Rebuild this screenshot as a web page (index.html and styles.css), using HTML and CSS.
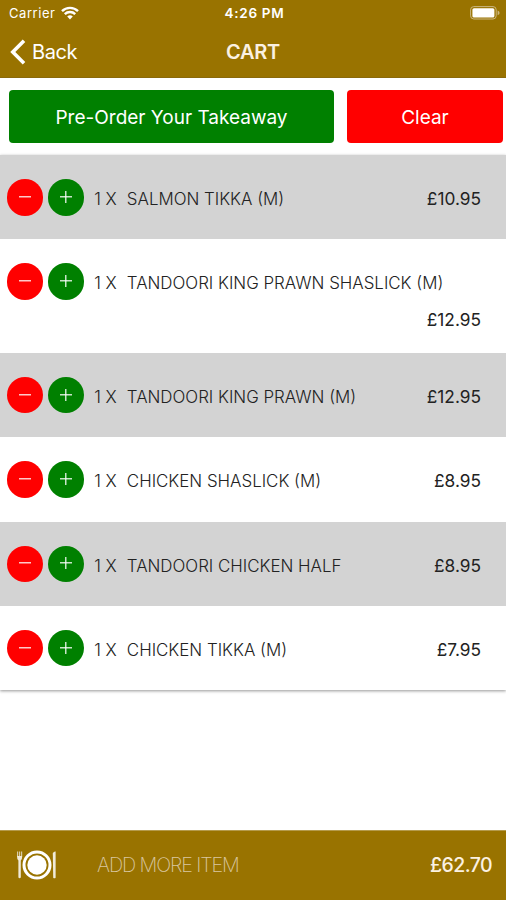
FILE: index.html
```html
<!DOCTYPE html>
<html lang="en">
<head>
    <meta charset="UTF-8">
    <meta name="viewport" content="width=device-width, initial-scale=1.0">
    <title>Cart</title>
    <link rel="stylesheet" href="styles.css">
</head>
<body>
    <header>
        <div class="status-bar">
            <div class="carrier">
                <span>Carrier</span>
                <svg class="wifi" viewBox="0 0 18 14" width="18" height="14">
                    <path d="M1 5.2a11.3 11.3 0 0 1 16 0M3.8 8.2a7.4 7.4 0 0 1 10.4 0" fill="none" stroke="#fff" stroke-width="2.4"/>
                    <path d="M9 13.4L6.2 10.5a4 4 0 0 1 5.6 0z" fill="#fff"/>
                </svg>
            </div>
            <span class="time">4:26 PM</span>
            <svg class="battery" viewBox="0 0 30 14" width="30" height="14">
                <rect x="0.6" y="0.6" width="25.6" height="12.4" rx="3.2" fill="none" stroke="#cbb780" stroke-width="1"/>
                <rect x="2.4" y="2.2" width="22" height="9.4" rx="1.6" fill="#fff"/>
                <path d="M27.6 4.6q2 .8 2 2.3t-2 2.3z" fill="#cbb780"/>
            </svg>
        </div>
        <nav>
            <a class="back" href="#">
                <svg viewBox="0 0 16 26" width="16" height="26">
                    <path d="M14 1.8L2.8 13L14 24.2" fill="none" stroke="#fff" stroke-width="3.6"/>
                </svg>
                <span>Back</span>
            </a>
            <h1>CART</h1>
        </nav>
    </header>

    <main>
        <div class="actions">
            <button class="btn order">Pre-Order Your Takeaway</button>
            <button class="btn clear">Clear</button>
        </div>

        <ul class="cart-list">
            <li>
                <button class="round minus"></button>
                <button class="round plus"></button>
                <span class="qty">1 X</span>
                <span class="name">SALMON TIKKA (M)</span>
                <span class="price">£10.95</span>
            </li>
            <li class="tall">
                <button class="round minus"></button>
                <button class="round plus"></button>
                <span class="qty">1 X</span>
                <span class="name">TANDOORI KING PRAWN SHASLICK (M)</span>
                <span class="price">£12.95</span>
            </li>
            <li>
                <button class="round minus"></button>
                <button class="round plus"></button>
                <span class="qty">1 X</span>
                <span class="name">TANDOORI KING PRAWN (M)</span>
                <span class="price">£12.95</span>
            </li>
            <li>
                <button class="round minus"></button>
                <button class="round plus"></button>
                <span class="qty">1 X</span>
                <span class="name">CHICKEN SHASLICK (M)</span>
                <span class="price">£8.95</span>
            </li>
            <li>
                <button class="round minus"></button>
                <button class="round plus"></button>
                <span class="qty">1 X</span>
                <span class="name">TANDOORI CHICKEN HALF</span>
                <span class="price">£8.95</span>
            </li>
            <li>
                <button class="round minus"></button>
                <button class="round plus"></button>
                <span class="qty">1 X</span>
                <span class="name">CHICKEN TIKKA (M)</span>
                <span class="price">£7.95</span>
            </li>
        </ul>
    </main>

    <footer>
        <svg class="plate" viewBox="0 0 40 30" width="40" height="30">
            <circle cx="21" cy="15" r="13" fill="none" stroke="#fff" stroke-width="3"/>
            <circle cx="21" cy="15" r="9.7" fill="#fff"/>
            <path d="M1.6 1.5v5M3.6 1.5v5M5.6 1.5v5" fill="none" stroke="#d8cba6" stroke-width="1.2"/>
            <path d="M1 6h5.2q0 3.5-1.4 4.500V27.500q-1.200 1.400-2.400 0V10.500Q1 9.500 1 6z" fill="#f0ead9"/>
            <path d="M36.800 3q1.400-2 2.800-1.500v26.300q-1.200 1-2.400 0z" fill="#f0ead9"/>
        </svg>
        <a class="add" href="#">ADD MORE ITEM</a>
        <span class="total">£62.70</span>
    </footer>
</body>
</html>
```
FILE: styles.css
```css
* {
    box-sizing: border-box;
}

body {
    margin: 0;
    height: 900px;
    display: flex;
    flex-direction: column;
    font-family: Inter, "Liberation Sans", sans-serif;
    background-color: #fff;
    color: #222;
}

header {
    height: 78px;
    background-color: #997300;
    border-bottom: solid 1px #8a6a0c;
    color: #fff;
}

.status-bar {
    height: 26px;
    padding: 0 6px 0 9px;
    display: grid;
    grid-template-columns: 1fr auto 1fr;
    align-items: center;
    font-size: 13px;
}

.carrier {
    display: flex;
    align-items: center;
    gap: 6px;
    letter-spacing: 0.55px;
}

.time {
    font-weight: 600;
    font-size: 13.5px;
    letter-spacing: 0.7px;
}

.battery {
    justify-self: end;
}

nav {
    height: 51px;
    padding: 0 10px;
    display: grid;
    grid-template-columns: 1fr auto 1fr;
    align-items: center;
}

.back {
    display: flex;
    align-items: center;
    gap: 6px;
    color: #fff;
    font-size: 20px;
    letter-spacing: -0.4px;
    text-decoration: none;
}

h1 {
    margin: 0;
    font-size: 20px;
    font-weight: 600;
    letter-spacing: -0.3px;
    color: #fbf1e2;
}

.actions {
    display: flex;
    gap: 13px;
    padding: 12px 3px 12px 9px;
    height: 77px;
}

.btn {
    height: 53px;
    padding: 2px 0 0;
    border: none;
    border-radius: 4px;
    color: #fff;
    font-family: inherit;
    font-size: 19px;
}

.order {
    flex: 1;
    background-color: #008000;
}

.clear {
    width: 156px;
    background-color: #f00;
}

.cart-list {
    list-style: none;
    margin: 0;
    padding: 0;
    box-shadow: 0 1px 3px #0000006b;
}

.cart-list > li {
    height: 84.4px;
    padding: 24px 25px 0 6.6px;
    display: flex;
    flex-wrap: wrap;
    align-content: flex-start;
    background-color: #fff;
    font-size: 16.9px;
    line-height: 40px;
}

.cart-list > li:nth-child(odd) {
    background-color: #d3d3d3;
}

.cart-list > li.tall {
    height: 113.4px;
}

.round {
    width: 36.5px;
    height: 36.5px;
    margin: 0 4.7px 0 0;
    padding: 0;
    border: none;
    border-radius: 50%;
    background: linear-gradient(#ffffffc8, #ffffffc8) 50% 48% / 12px 1.5px no-repeat #f00;
}

.plus {
    background: linear-gradient(#ffffffc8, #ffffffc8) 50% 48% / 12px 1.5px no-repeat,
        linear-gradient(#ffffffc8, #ffffffc8) 50% 48% / 1.5px 12px no-repeat #008000;
}

.qty {
    width: 32.7px;
    margin-left: 5.2px;
    font-weight: 300;
}

.name {
    font-weight: 300;
    white-space: nowrap;
}

.price {
    margin-left: auto;
    height: 37px;
    font-size: 17.3px;
    font-weight: 380;
}

.tall .price {
    margin-top: -3px;
}

footer {
    margin-top: auto;
    height: 70px;
    padding: 0 14px 0 16px;
    display: flex;
    align-items: center;
    background-color: #997300;
    border-top: solid 1px #b59b4d;
    color: #fbf1e2;
    font-size: 20px;
}

.plate {
    margin-top: -1px;
}

.add {
    margin: -2px 0 0 41px;
    color: #d9c7a0;
    font-weight: 200;
    font-size: 19.8px;
    letter-spacing: -1.1px;
    text-decoration: none;
}

.total {
    margin: -2px 0 0 auto;
    font-size: 19.5px;
    font-weight: 500;
    letter-spacing: -0.55px;
}
```
